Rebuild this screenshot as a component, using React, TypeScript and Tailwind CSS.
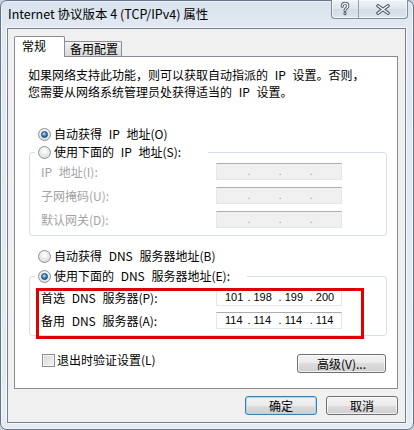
import type { ReactNode } from "react"

const cjk = "font-['Noto_Sans_CJK_SC',sans-serif]"

function Radio({ checked }: { checked?: boolean }) {
    return (
        <span className="flex h-[13px] w-[13px] shrink-0 items-center justify-center rounded-full border border-[#8d9196] bg-[radial-gradient(circle_at_50%_35%,#ffffff,#dfe1e4_70%,#c9ccd0)]">
            {checked && (
                <span className="h-[7px] w-[7px] rounded-full border border-[#163f68] bg-[radial-gradient(circle_at_40%_35%,#b8e6ff,#3a86c8_50%,#17497c)]" />
            )}
        </span>
    )
}

function RadioRow({ checked, children }: { checked?: boolean; children: ReactNode }) {
    return (
        <div className="flex h-[16px] items-center gap-[3px]">
            <Radio checked={checked} />
            <span className="leading-[16px] whitespace-nowrap">{children}</span>
        </div>
    )
}

function IpBox({ values, disabled }: { values?: string[]; disabled?: boolean }) {
    const segs = values ?? ["", "", "", ""]
    return (
        <div
            className={`flex h-[17px] w-[126px] items-center border border-[#e3e6ea] border-t-[#abadb3] pl-[8px] font-['Liberation_Sans',sans-serif] text-[11px] leading-[15px] ${
                disabled ? "bg-[#f0f0f0] text-[#a0a0a0]" : "bg-white text-black"
            }`}
        >
            {segs.map((v, i) =>
                i === 0 ? (
                    <span key={i} className="w-[23px]">{v}</span>
                ) : (
                    <span key={i} className="flex w-[32px]">
                        <span>.</span>
                        <span className="ml-[3px]">{v}</span>
                    </span>
                )
            )}
        </div>
    )
}

function Row({ label, disabled, values }: { label: string; disabled?: boolean; values?: string[] }) {
    return (
        <div className="flex items-center">
            <span className={`w-[175px] leading-[16px] whitespace-nowrap ${disabled ? "text-[#a3a3a3]" : "text-black"}`}>
                {label}
            </span>
            <IpBox values={values} disabled={disabled} />
        </div>
    )
}

function WinButton({ children, primary, width }: { children: ReactNode; primary?: boolean; width: string }) {
    return (
        <button
            className={`${width} h-[19px] rounded-[3px] border bg-[linear-gradient(180deg,#f2f2f2,#ebebeb_50%,#dddddd_50%,#cfcfcf)] text-[12px] leading-[15px] text-black ${
                primary
                    ? "border-[#3c7fb1] shadow-[inset_0_0_0_1px_#9fdaf7]"
                    : "border-[#707070] shadow-[inset_0_0_0_1px_rgba(255,255,255,0.7)]"
            }`}
        >
            {children}
        </button>
    )
}

function CaptionButtons() {
    return (
        <div className="-mt-px mr-[5px] flex h-[19px] overflow-hidden rounded-b-[4px] border border-t-0 border-[#7e8b99] bg-[linear-gradient(180deg,#eef2f7,#dfe6ee_50%,#d3dce6_50%,#dce4ed)] shadow-[inset_0_0_0_1px_rgba(255,255,255,0.6)]">
            <div className="flex w-[27px] items-center justify-center border-r border-[#97a3b0]">
                <svg width="10" height="14" viewBox="0 0 10 14">
                    <path d="M2.2 4.2C2.2 2 3.6 1.3 5 1.3C6.6 1.3 7.9 2.3 7.9 3.9C7.9 6.2 5 6.1 5 8.6" fill="none" stroke="#4a5665" strokeWidth="3" strokeLinecap="round" />
                    <circle cx="5" cy="11.6" r="1.6" fill="#4a5665" />
                    <path d="M2.2 4.2C2.2 2 3.6 1.3 5 1.3C6.6 1.3 7.9 2.3 7.9 3.9C7.9 6.2 5 6.1 5 8.6" fill="none" stroke="#ffffff" strokeWidth="1.2" strokeLinecap="round" />
                    <circle cx="5" cy="11.6" r="0.7" fill="#ffffff" />
                </svg>
            </div>
            <div className="flex w-[48px] items-center justify-center">
                <svg width="14" height="11" viewBox="0 0 14 11">
                    <path d="M2 1.8L12 9.2M12 1.8L2 9.2" fill="none" stroke="#4a5665" strokeWidth="3.4" strokeLinecap="round" />
                    <path d="M2 1.8L12 9.2M12 1.8L2 9.2" fill="none" stroke="#ffffff" strokeWidth="1.4" strokeLinecap="round" />
                </svg>
            </div>
        </div>
    )
}

export default function App() {
    return (
        <div className={`h-[430px] w-[414px] bg-[#c5d0dc] ${cjk} text-[12px] text-black`}>
            <div className="flex h-[430px] w-[414px] flex-col rounded-[7px] border border-[#64748a] bg-[linear-gradient(180deg,#d9e3ee,#e2e9f2_28px,#e5ebf3)] pl-[6px] shadow-[inset_0_0_0_1px_rgba(255,255,255,0.55)]">
                {/* caption */}
                <div className="flex h-[27px] items-start justify-between">
                    <div className="flex h-[27px] items-center pl-[1px] text-[12.5px] whitespace-nowrap">
                        Internet 协议版本 4 (TCP/IPv4) 属性
                    </div>
                    <CaptionButtons />
                </div>

                {/* client area */}
                <div className="h-[395px] w-[399px] border border-[#76808b] bg-[#f0f0f0] pt-[7px] pl-[6px] shadow-[0_0_0_1px_rgba(255,255,255,0.7)]">
                    <div className="flex h-[20px] items-end">
                        <div className="relative z-10 -mb-px flex h-[21px] w-[51px] items-center rounded-t-[2px] border border-b-0 border-[#898c95] bg-white pb-[3px] pl-[7px]">
                            常规
                        </div>
                        <div className="-ml-px flex h-[15px] w-[58px] items-center rounded-t-[2px] border border-b-0 border-[#898c95] bg-[linear-gradient(180deg,#f3f3f3,#e5e5e5_50%,#dadada)] pl-[5px]">
                            备用配置
                        </div>
                    </div>

                    <div className="relative flex h-[333px] w-[384px] flex-col border border-[#898c95] bg-white [word-spacing:4px]">
                        <div className="mt-[9px] flex flex-col pl-[13px] whitespace-nowrap">
                            <p className="leading-[17px]">如果网络支持此功能，则可以获取自动指派的 IP 设置。否则，</p>
                            <p className="leading-[17px]">您需要从网络系统管理员处获得适当的 IP 设置。</p>
                        </div>

                        <div className="mt-[26px] pl-[23px]">
                            <RadioRow checked>自动获得 IP 地址(O)</RadioRow>
                        </div>

                        <fieldset className="mt-[2px] ml-[14px] w-[358px] rounded-[3px] border border-[#d5dfe5]">
                            <legend className="ml-[5px] flex h-[16px] w-[173px] items-center bg-white pl-[3px]">
                                <RadioRow>使用下面的 IP 地址(S):</RadioRow>
                            </legend>
                            <div className="flex flex-col gap-[7px] pt-[3px] pb-[7px] pl-[11px]">
                                <Row label="IP 地址(I):" disabled />
                                <Row label="子网掩码(U):" disabled />
                                <Row label="默认网关(D):" disabled />
                            </div>
                        </fieldset>

                        <div className="mt-[12px] pl-[23px]">
                            <RadioRow>自动获得 DNS 服务器地址(B)</RadioRow>
                        </div>

                        <fieldset className="mt-[4px] ml-[14px] w-[358px] rounded-[3px] border border-[#d5dfe5]">
                            <legend className="ml-[5px] flex h-[16px] w-[212px] items-center bg-white pl-[3px]">
                                <RadioRow checked>使用下面的 DNS 服务器地址(E):</RadioRow>
                            </legend>
                            <div className="flex flex-col gap-[6px] pt-[5px] pb-[6px] pl-[11px]">
                                <Row label="首选 DNS 服务器(P):" values={["101", "198", "199", "200"]} />
                                <Row label="备用 DNS 服务器(A):" values={["114", "114", "114", "114"]} />
                            </div>
                        </fieldset>

                        <div className="mt-[16px] flex items-start justify-between pr-[11px] pl-[27px]">
                            <div className="flex h-[16px] items-center gap-[2px]">
                                <span className="h-[13px] w-[13px] border border-[#8f8f8f] bg-[linear-gradient(135deg,#d6d6d6,#f6f6f6)] shadow-[inset_0_0_0_1px_#f4f4f4]" />
                                <span className="leading-[16px]">退出时验证设置(L)</span>
                            </div>
                            <div className="mt-[2px]">
                                <WinButton width="w-[89px]">高级(V)...</WinButton>
                            </div>
                        </div>

                        {/* red annotation */}
                        <div className="absolute top-[231px] left-[21px] h-[51px] w-[328px] border-[3px] border-[#e00000]" />
                    </div>

                    <div className="mt-[7px] flex w-[384px] justify-end gap-[9px]">
                        <WinButton primary width="w-[72px]">确定</WinButton>
                        <WinButton width="w-[72px]">取消</WinButton>
                    </div>
                </div>
            </div>
        </div>
    )
}
